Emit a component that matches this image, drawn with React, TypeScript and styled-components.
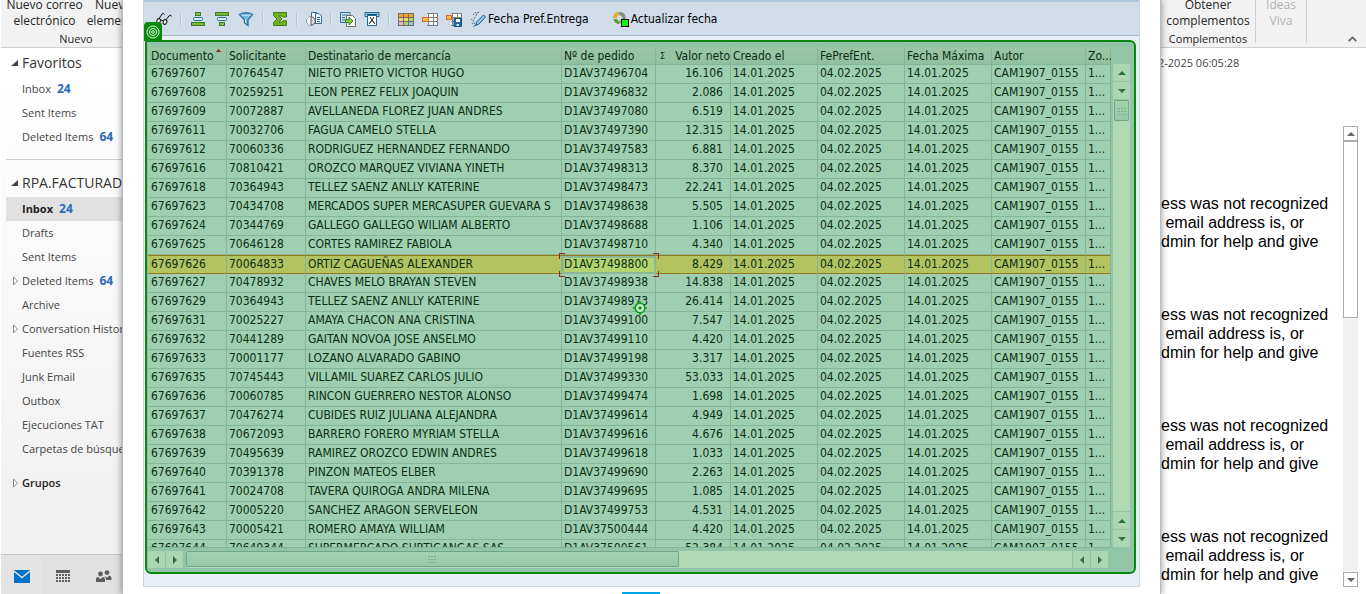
import React from "react";
import styled, { createGlobalStyle, css } from "styled-components";

const GlobalStyle = createGlobalStyle`
  * { box-sizing: border-box; }
  body { margin: 0; background: #fff; overflow: hidden; }
  button { font: inherit; color: inherit; border: 0; padding: 0; margin: 0; background: none; cursor: pointer; }
  a { color: inherit; text-decoration: none; }
  ul { list-style: none; margin: 0; padding: 0; }
`;

const uiFont = `"Open Sans", "Noto Sans", sans-serif`;
const gridFont = `"DejaVu Sans Condensed", "Noto Sans", sans-serif`;

const Desktop = styled.div`
  display: grid;
  grid-template-columns: 122px minmax(0, 1fr) 205px;
  height: 100vh;
  overflow: hidden;
  font: 12px/16px ${uiFont};
  color: #262626;
`;

/* ---------- Mail: folder pane ---------- */

const FolderPane = styled.aside`
  display: flex;
  flex-direction: column;
  min-height: 0;
  overflow: hidden;
  border-left: 1px solid #fff;
  background: linear-gradient(#fff 80px, #f1f1f1 520px);
`;

const Ribbon = styled.div`
  display: flex;
  flex: none;
  height: 48px;
  background: #f2f2f2;
  border-bottom: 1px solid #cfcfcf;
  white-space: nowrap;
`;

const RibbonGroup = styled.section<{ $width: number; $line?: boolean }>`
  display: flex;
  flex-direction: column;
  flex: none;
  width: ${(p) => p.$width}px;
  height: ${(p) => (p.$line ? "43px" : "47px")};
  border-right: ${(p) => (p.$line ? "1px solid #d0d0d0" : "0")};
`;

const RibbonButtons = styled.div`
  display: flex;
  justify-content: center;
  height: 29px;
  align-items: flex-end;
`;

const RibbonButton = styled.button<{ $dim?: boolean }>`
  flex: none;
  padding: 0 2px;
  line-height: 16px;
  font-size: 12px;
  text-align: center;
  color: ${(p) => (p.$dim ? "#b3b3b3" : "#262626")};
`;

const RibbonLabel = styled.div`
  margin-top: 2px;
  text-align: center;
  font-size: 11px;
`;

const FolderNav = styled.nav`
  flex: 1;
  min-height: 0;
  white-space: nowrap;
  padding: 1px 0 0 5px;
`;

const FolderHeading = styled.h2`
  display: flex;
  align-items: center;
  gap: 4px;
  height: 28px;
  margin: 0;
  padding-left: 5px;
  font-size: 14px;
  font-weight: 400;
  color: #333;
`;

const FolderRow = styled.li<{ $active?: boolean }>`
  display: flex;
  align-items: center;
  gap: 4px;
  height: 24px;
  padding-left: 5px;
  font-size: 11px;
  font-weight: ${(p) => (p.$active ? 700 : 400)};
  color: ${(p) => (p.$active ? "#222" : "#444")};
  background: ${(p) => (p.$active ? "#e1e1e1" : "transparent")};
`;

const FolderMark = styled.svg`
  flex: none;
  width: 7px;
  height: 10px;
`;

const Unread = styled.span`
  margin-left: 2px;
  color: #2a6ab8;
  font-size: 12px;
  font-weight: 700;
`;

const Divider = styled.hr`
  margin: 10px 0 9px;
  border: 0;
  border-top: 1px solid #d0d0d0;
`;

const GroupsRow = styled.div`
  display: flex;
  align-items: center;
  gap: 4px;
  height: 24px;
  margin-top: 10px;
  padding-left: 5px;
  font-size: 11px;
  font-weight: 600;
  color: #222;
`;

const ModuleBar = styled.div`
  display: flex;
  flex: none;
  height: 40px;
  border-top: 1px solid #c8c8c8;
  background: #e1e1e1;
`;

const ModuleButton = styled.button<{ $active?: boolean }>`
  display: flex;
  align-items: center;
  justify-content: center;
  width: 41px;
  flex: none;
  padding-top: 3px;
  background: ${(p) => (p.$active ? "#e4e4e4" : "none")};
`;

/* ---------- Order window ---------- */

const Window = styled.main`
  position: relative;
  z-index: 1;
  display: flex;
  flex-direction: column;
  min-height: 0;
  padding: 0 20px;
  background: #fff;
  border: solid #b4bec8;
  border-width: 0 1px;
  box-shadow: 0 0 7px rgba(0, 0, 0, 0.45);
`;

const Panel = styled.div`
  display: flex;
  flex-direction: column;
  flex: 1;
  min-height: 0;
  background: #e8eff7;
  border: solid #cbd6e2;
  border-width: 0 1px 1px;
`;

const Toolbar = styled.div`
  display: flex;
  align-items: center;
  gap: 8px;
  flex: none;
  height: 36px;
  padding-left: 12px;
  border-top: 2px solid #b0c6dd;
  border-bottom: 1px solid #a9bacb;
  background: #d0dde9;
  font: 12px/16px ${gridFont};
  color: #000;
`;

const ToolButton = styled.button<{ $gap?: boolean }>`
  display: flex;
  align-items: center;
  gap: 2px;
  white-space: nowrap;
  margin-left: ${(p) => (p.$gap ? "16px" : "0")};
`;

const ToolSeparator = styled.span`
  width: 2px;
  height: 14px;
  background: #b4c6d8;
  border-right: 1px solid #dde7f0;
`;

const Frame = styled.section`
  position: relative;
  display: flex;
  flex-direction: column;
  flex: 1;
  min-height: 0;
  margin: 4px 3px 12px 1px;
  padding: 5px 2px 4px 1px;
  border: 2px solid #078a0c;
  border-radius: 0 6px 6px 6px;
  background: #92c4a7;
`;

const TargetBadge = styled.span`
  position: absolute;
  left: -3px;
  top: -20px;
  display: flex;
  align-items: center;
  justify-content: center;
  width: 18px;
  height: 19px;
  border-radius: 4px 4px 0 0;
  background: #078a0c;
`;

const GridArea = styled.div`
  display: grid;
  grid-template-columns: minmax(0, 1fr) 20px;
  column-gap: 1px;
  flex: 1;
  min-height: 0;
`;

const TableClip = styled.div`
  min-height: 0;
  overflow: hidden;
  background: #9fcfb0;
  border-bottom: 1px solid #85b598;
`;

const OrderTable = styled.table`
  width: 100%;
  table-layout: fixed;
  border-collapse: separate;
  border-spacing: 0;
  font: 12px/16px ${gridFont};
  color: #0c2e14;
`;

const Col = styled.col<{ $width?: number }>`
  width: ${(p) => (p.$width ? p.$width + "px" : "auto")};
`;

const cell = css`
  position: relative;
  height: 19px;
  padding: 0 0 0 2px;
  line-height: 16px;
  text-align: left;
  vertical-align: top;
  white-space: nowrap;
  border-right: 1px solid #85b598;

  &:first-child {
    padding-left: 3px;
  }
`;

const HeadCell = styled.th<{ $right?: boolean }>`
  ${cell}
  height: 18px;
  padding-top: 1px;
  font-weight: 400;
  text-align: ${(p) => (p.$right ? "right" : "left")};
  background: linear-gradient(#9cc7a3, #92c09f);
  border-bottom: 1px solid #85b598;
`;

const SumMark = styled.span`
  position: absolute;
  left: 4px;
  font-size: 9px;
`;

const SortMark = styled.svg`
  position: absolute;
  right: 5px;
  top: 2px;
`;

const Cell = styled.td<{ $right?: boolean }>`
  ${cell}
  padding-right: ${(p) => (p.$right ? "7px" : "0")};
  text-align: ${(p) => (p.$right ? "right" : "left")};
  border-bottom: 1px solid #85b598;
`;

const Row = styled.tr<{ $selected?: boolean }>`
  ${(p) =>
    p.$selected &&
    css`
      background: #b2c35f;
      ${Cell} {
        border-top: 1px solid #93791c;
        border-bottom-color: #93791c;
      }
    `}
`;

const Focus = styled.span`
  position: absolute;
  z-index: 1;
  inset: -3px -4px -4px -3px;
  pointer-events: none;

  &::before {
    content: "";
    position: absolute;
    inset: 3px;
    border: 2px solid #8cb896;
  }
`;

const FocusText = styled.span`
  display: block;
  height: 17px;
  margin-left: -2px;
  padding-left: 2px;
  background: #b2d570;
  position: relative;
`;

const FocusCorner = styled.i<{ $x: "left" | "right"; $y: "top" | "bottom" }>`
  position: absolute;
  ${(p) => p.$x}: 0;
  ${(p) => p.$y}: 0;
  width: 6px;
  height: 6px;
  border: 0 solid #8c2f10;
  border-${(p) => p.$x}-width: 1px;
  border-${(p) => p.$y}-width: 1px;
`;

const ClickMark = styled.svg`
  position: absolute;
  z-index: 1;
  right: 8px;
  top: 8px;
`;

const ScrollColumn = styled.div`
  display: flex;
  flex-direction: column;
  gap: 1px;
  padding: 17px 0 1px 1px;
`;

const ScrollRow = styled.div`
  display: flex;
  gap: 1px;
  flex: none;
  height: 17px;
  margin: 3px 24px 0 0;
`;

const GridArrow = styled.button`
  display: flex;
  align-items: center;
  justify-content: center;
  flex: none;
  width: 17px;
  height: 17px;
  background: #abd6b1;
`;

const GridTrack = styled.div<{ $vertical?: boolean }>`
  flex: ${(p) => (p.$vertical ? "1 1 0" : "1 1 0")};
  min-width: 0;
  min-height: 0;
  width: ${(p) => (p.$vertical ? "17px" : "auto")};
  background: #b0d9b4;
  margin-left: ${(p) => (p.$vertical ? "0" : "2px")};
`;

const GridThumb = styled.div<{ $vertical?: boolean }>`
  display: flex;
  align-items: center;
  justify-content: center;
  width: ${(p) => (p.$vertical ? "15px" : "55.6%")};
  height: ${(p) => (p.$vertical ? "21px" : "16px")};
  margin-left: ${(p) => (p.$vertical ? "1px" : "0")};
  border: 1px solid #74a686;
  border-radius: 1px;
  background: linear-gradient(#a4d1b0, #98c8a8);
`;

const TaskMark = styled.div`
  align-self: center;
  flex: none;
  width: 38px;
  height: 2px;
  margin: 5px 1px 0 0;
  background: #00a8e8;
`;

/* ---------- Mail: reading pane ---------- */

const ReadingPane = styled.aside`
  display: flex;
  flex-direction: column;
  min-height: 0;
  overflow: hidden;
  background: #fff;
`;

const Collapse = styled.button`
  display: flex;
  align-self: flex-end;
  margin: 0 9px 5px auto;
`;

const Stamp = styled.time`
  display: block;
  flex: none;
  height: 78px;
  padding-top: 7px;
  font-size: 11px;
  line-height: 16px;
  text-indent: -3px;
  color: #444;
  white-space: nowrap;
`;

const Reader = styled.div`
  display: flex;
  flex: 1;
  min-height: 0;
  padding: 0 8px 7px 0;
`;

const MessageList = styled.div`
  flex: 1;
  min-width: 0;
  padding-top: 68px;
  overflow: hidden;
`;

const Message = styled.p`
  margin: 0 0 54px;
  font: 16px/19px "Liberation Sans", Arial, sans-serif;
  color: #000;
  white-space: pre;
`;

const MailScroll = styled.div`
  display: flex;
  flex-direction: column;
  flex: none;
  width: 15px;
  background: #f1f1f1;
`;

const MailArrow = styled.button`
  display: flex;
  align-items: center;
  justify-content: center;
  height: 15px;
  flex: none;
  border: 1px solid #ababab;
  background: #fff;
`;

const MailTrack = styled.div`
  flex: 1;
`;

const MailThumb = styled.div`
  height: 41%;
  border: 1px solid #ababab;
  background: #fff;
`;

/* ---------- Data ---------- */

const orders: [string, string, string, string, string][] = [
  ["67697607", "70764547", "NIETO PRIETO VICTOR HUGO", "D1AV37496704", "16.106"],
  ["67697608", "70259251", "LEON PEREZ FELIX JOAQUIN", "D1AV37496832", "2.086"],
  ["67697609", "70072887", "AVELLANEDA FLOREZ JUAN ANDRES", "D1AV37497080", "6.519"],
  ["67697611", "70032706", "FAGUA CAMELO STELLA", "D1AV37497390", "12.315"],
  ["67697612", "70060336", "RODRIGUEZ HERNANDEZ FERNANDO", "D1AV37497583", "6.881"],
  ["67697616", "70810421", "OROZCO MARQUEZ VIVIANA YINETH", "D1AV37498313", "8.370"],
  ["67697618", "70364943", "TELLEZ SAENZ ANLLY KATERINE", "D1AV37498473", "22.241"],
  ["67697623", "70434708", "MERCADOS SUPER MERCASUPER GUEVARA S", "D1AV37498638", "5.505"],
  ["67697624", "70344769", "GALLEGO GALLEGO WILIAM ALBERTO", "D1AV37498688", "1.106"],
  ["67697625", "70646128", "CORTES RAMIREZ FABIOLA", "D1AV37498710", "4.340"],
  ["67697626", "70064833", "ORTIZ CAGUEÑAS ALEXANDER", "D1AV37498800", "8.429"],
  ["67697627", "70478932", "CHAVES MELO BRAYAN STEVEN", "D1AV37498938", "14.838"],
  ["67697629", "70364943", "TELLEZ SAENZ ANLLY KATERINE", "D1AV37498973", "26.414"],
  ["67697631", "70025227", "AMAYA CHACON ANA CRISTINA", "D1AV37499100", "7.547"],
  ["67697632", "70441289", "GAITAN NOVOA JOSE ANSELMO", "D1AV37499110", "4.420"],
  ["67697633", "70001177", "LOZANO ALVARADO GABINO", "D1AV37499198", "3.317"],
  ["67697635", "70745443", "VILLAMIL SUAREZ CARLOS JULIO", "D1AV37499330", "53.033"],
  ["67697636", "70060785", "RINCON GUERRERO NESTOR ALONSO", "D1AV37499474", "1.698"],
  ["67697637", "70476274", "CUBIDES RUIZ JULIANA ALEJANDRA", "D1AV37499614", "4.949"],
  ["67697638", "70672093", "BARRERO FORERO MYRIAM STELLA", "D1AV37499616", "4.676"],
  ["67697639", "70495639", "RAMIREZ OROZCO EDWIN ANDRES", "D1AV37499618", "1.033"],
  ["67697640", "70391378", "PINZON MATEOS ELBER", "D1AV37499690", "2.263"],
  ["67697641", "70024708", "TAVERA QUIROGA ANDRA MILENA", "D1AV37499695", "1.085"],
  ["67697642", "70005220", "SANCHEZ ARAGON SERVELEON", "D1AV37499753", "4.531"],
  ["67697643", "70005421", "ROMERO AMAYA WILLIAM", "D1AV37500444", "4.420"],
  ["67697644", "70649344", "SUPERMERCADO SURTIGANGAS SAS", "D1AV37500561", "52.384"],
];

const selectedOrder = "67697626";
const clickedOrder = "67697629";

type Folder = { name: string; unread?: number; active?: boolean; branch?: boolean };

const favorites: Folder[] = [
  { name: "Inbox", unread: 24 },
  { name: "Sent Items" },
  { name: "Deleted Items", unread: 64 },
];

const folders: Folder[] = [
  { name: "Inbox", unread: 24, active: true },
  { name: "Drafts" },
  { name: "Sent Items" },
  { name: "Deleted Items", unread: 64, branch: true },
  { name: "Archive" },
  { name: "Conversation History", branch: true },
  { name: "Fuentes RSS" },
  { name: "Junk Email" },
  { name: "Outbox" },
  { name: "Ejecuciones TAT" },
  { name: "Carpetas de búsqueda" },
];

/* ---------- Icons ---------- */

const Icon = ({ children }: { children: React.ReactNode }) => (
  <svg width="16" height="16" viewBox="0 0 16 16" fill="none" aria-hidden="true">
    {children}
  </svg>
);

const GlassesIcon = () => (
  <Icon>
    <g stroke="#111" strokeWidth="1">
      <ellipse cx="2.6" cy="10" rx="1.7" ry="2.4" transform="rotate(20 2.6 10)" fill="#eef4f9" />
      <ellipse cx="9" cy="11" rx="1.8" ry="2.4" transform="rotate(20 9 11)" fill="#eef4f9" />
      <path d="M4.5 9.5Q6 8.5 7.2 10M3.2 7.4L6 3Q7.5 1.5 8.5 3.5M10.2 8.6L13 4.8Q15 3 15.4 5.5" />
    </g>
  </Icon>
);

const SortAscIcon = () => (
  <Icon>
    <rect x="5.5" y="1.5" width="5" height="3" fill="#8cc03c" stroke="#3f7d2e" />
    <rect x="3.5" y="6.5" width="9" height="3" rx="1" fill="#dceaf4" stroke="#1e6f9e" />
    <rect x="1.5" y="11.5" width="13" height="3" fill="#7ab82e" stroke="#3f7d2e" />
  </Icon>
);

const SortDescIcon = () => (
  <Icon>
    <rect x="1.5" y="1.5" width="13" height="3" fill="#7ab82e" stroke="#3f7d2e" />
    <rect x="3.5" y="6.5" width="9" height="3" rx="1" fill="#dceaf4" stroke="#1e6f9e" />
    <rect x="5.5" y="11.5" width="5" height="3" fill="#8cc03c" stroke="#3f7d2e" />
  </Icon>
);

const FilterIcon = () => (
  <Icon>
    <path d="M1.5 3.5Q8 0 14.5 3.5L10 9V14.5L6.5 12V9Z" fill="#7fb0d4" stroke="#2e78ab" strokeWidth="1.4" />
    <path d="M3 3.8Q8 5.5 13 3.8M7.5 8V12" stroke="#c8dff0" />
  </Icon>
);

const SumIcon = () => (
  <Icon>
    <path d="M1.5 1.5H14.5V6H10.5L9.5 5H7L10 8L7 11H10L11 9.8H14.5V14.5H1.5V11.5L5 8L1.5 4.5Z" fill="#72b01c" stroke="#3f7d1e" />
  </Icon>
);

const PreviewIcon = () => (
  <Icon>
    <path d="M5.5 1.5H10.5V12.5H5.5Z" fill="#fff" stroke="#336f99" />
    <path d="M9.5 2.5H13L15.5 5V12.5H9.5Z" fill="#e8f3fb" stroke="#336f99" />
    <path d="M11 6.5H14M11 8.5H14M11 10.5H14" stroke="#336f99" />
    <circle cx="5" cy="10" r="4.2" fill="#ddd" stroke="#555" />
    <path d="M5 5.8V14.2A4.2 4.2 0 0 1 5 5.8" fill="#fff" />
    <path d="M5 6V14" stroke="#555" />
  </Icon>
);

const ExportIcon = () => (
  <Icon>
    <path d="M.5 1.5H10V11.5H.5Z" fill="#cfe1ef" stroke="#2e6d99" />
    <path d="M2 4H8M2 6.5H5M2 9H5" stroke="#2e6d99" />
    <path d="M6.5 4.5H12.5L15.5 7.5V15.5H6.5Z" fill="#fff" stroke="#6b6b6b" />
    <path d="M5.5 8.5H9V6L13 10L9 14V11.5H5.5Z" fill="#8ac63c" stroke="#3f7d2e" />
  </Icon>
);

const SendIcon = () => (
  <Icon>
    <path d="M1 1.5H15V5.5H1Z" fill="#9ec3de" stroke="#1e6a99" />
    <path d="M3 3.5H13" stroke="#1e4a69" />
    <path d="M3.5 4.5H12.5V14.5H3.5Z" fill="#fff" stroke="#1e6a99" />
    <path d="M6 6L10 12M10 6L6 12M5 13L8 9L11 13" stroke="#333" />
  </Icon>
);

const LayoutIcon = () => (
  <Icon>
    <path d="M0 2H16V15H0Z" fill="#6d6d6d" />
    <path d="M1 3H5V6H1ZM6 3H10V6H6ZM11 3H15V6H11Z" fill="#f5a623" />
    <path d="M1 7H5V10H1ZM6 7H10V10H6Z" fill="#f7d774" />
    <path d="M11 7H15V10H11ZM6 11H10V14H6Z" fill="#a9d36c" />
    <path d="M1 11H5V14H1Z" fill="#f3b7c6" />
    <path d="M11 11H15V14H11Z" fill="#8fc4ea" />
  </Icon>
);

const GridLines = () => (
  <>
    <path d="M5 2.5H15.5V13.5H5Z" fill="#fff" />
    <path d="M5 2.5H15.5M5 6.5H15.5M5 10.5H15.5M5 14.5H15.5M6.5 2V15M11.5 2V15M15.5 2V15" stroke="#808080" />
  </>
);

const ChooseLayoutIcon = () => (
  <Icon>
    <GridLines />
    <rect x=".5" y="6.5" width="6" height="4" fill="#ffc34d" stroke="#e2622a" />
  </Icon>
);

const SaveLayoutIcon = () => (
  <Icon>
    <GridLines />
    <rect x=".5" y="4.5" width="5" height="4" fill="#ffc34d" stroke="#e2622a" />
    <path d="M8 7.5H15.5V15.5H8Z" fill="#1e6a99" stroke="#14507a" />
    <path d="M10 8H14V11H10Z" fill="#fff" />
    <path d="M10.5 13H13V15H10.5Z" fill="#cfe1ef" />
  </Icon>
);

const EditDateIcon = () => (
  <Icon>
    <path d="M3 4L5 1.5L7 3L3.5 9M1 8L4 10L2 13L5 12M7 1.5H9" stroke="#4b6f90" strokeDasharray="2 1" />
    <path d="M5.5 14.5L6.5 11L13.5 4L15.5 6L9 13Z" fill="#9cc7e4" stroke="#1f5f8f" />
    <path d="M3.5 15.5L6.5 13.5" stroke="#1f5f8f" />
  </Icon>
);

const RefreshDateIcon = () => (
  <Icon>
    <circle cx="6.5" cy="7" r="4.6" stroke="#5a9c34" strokeWidth="3" strokeDasharray="6 1" />
    <path d="M6.5 2.4A4.6 4.6 0 0 1 11.1 7" stroke="#8a8a8a" strokeWidth="3" />
    <path d="M1.9 7A4.6 4.6 0 0 1 5.5 2.5" stroke="#f0ab2c" strokeWidth="3" />
    <rect x="8.5" y="8.5" width="7" height="7" fill="#12f212" stroke="#000" />
  </Icon>
);

type Direction = "up" | "down" | "left" | "right";

const Arrow = ({ to, color }: { to: Direction; color: string }) => {
  const shapes: Record<Direction, string> = {
    up: "M0 6L4 2L8 6Z",
    down: "M0 2L4 6L8 2Z",
    left: "M6 0L2 4L6 8Z",
    right: "M2 0L6 4L2 8Z",
  };
  return (
    <svg width="8" height="8" viewBox="0 0 8 8" aria-hidden="true">
      <path d={shapes[to]} fill={color} />
    </svg>
  );
};

const Grip = () => (
  <svg width="8" height="8" viewBox="0 0 8 8" aria-hidden="true">
    <path d="M0 1.5H2M3 1.5H5M6 1.5H8M0 4.5H2M3 4.5H5M6 4.5H8M0 7.5H2M3 7.5H5M6 7.5H8" stroke="#7cae8e" />
  </svg>
);

const Expanded = () => (
  <FolderMark viewBox="0 0 7 10" aria-hidden="true">
    <path d="M7 2V8H0Z" fill="#444" />
  </FolderMark>
);

const Branch = ({ shown }: { shown?: boolean }) => (
  <FolderMark viewBox="0 0 7 10" aria-hidden="true">
    {shown && <path d="M2.5 1L6.5 5L2.5 9Z" fill="#fff" stroke="#888" />}
  </FolderMark>
);

/* ---------- Sections ---------- */

const FolderList = ({ items }: { items: Folder[] }) => (
  <ul>
    {items.map((f) => (
      <FolderRow key={f.name} $active={f.active}>
        <Branch shown={f.branch} />
        <a href="#folder">{f.name}</a>
        {f.unread && <Unread>{f.unread}</Unread>}
      </FolderRow>
    ))}
  </ul>
);

const MailFolders = () => (
  <FolderPane>
    <Ribbon>
      <RibbonGroup $width={150}>
        <RibbonButtons>
          <RibbonButton>Nuevo correo<br />electrónico</RibbonButton>
          <RibbonButton>Nuevos<br />elementos</RibbonButton>
        </RibbonButtons>
        <RibbonLabel>Nuevo</RibbonLabel>
      </RibbonGroup>
    </Ribbon>
    <FolderNav>
      <FolderHeading><Expanded />Favoritos</FolderHeading>
      <FolderList items={favorites} />
      <Divider />
      <FolderHeading><Expanded />RPA.FACTURAD</FolderHeading>
      <FolderList items={folders} />
      <GroupsRow><Branch shown /><a href="#groups">Grupos</a></GroupsRow>
    </FolderNav>
    <ModuleBar>
      <ModuleButton $active aria-label="Correo">
        <svg width="16" height="13" viewBox="0 0 16 13">
          <path d="M0 0H16V13H0Z" fill="#0072c6" />
          <path d="M0 1L8 7.5L16 1" fill="none" stroke="#e4e4e4" strokeWidth="1.4" />
        </svg>
      </ModuleButton>
      <ModuleButton aria-label="Calendario">
        <svg width="14" height="12" viewBox="0 0 14 12">
          <path d="M0 0H14V3H0Z" fill="#5f5f5f" />
          <path d="M0 5H14M0 8H14M0 11H14" stroke="#5f5f5f" strokeWidth="2" strokeDasharray="2 1" />
        </svg>
      </ModuleButton>
      <ModuleButton aria-label="Personas">
        <svg width="16" height="12" viewBox="0 0 16 12" fill="#5f5f5f">
          <circle cx="4.5" cy="4" r="2.4" />
          <path d="M0 12V9Q0 7 2 7L4.5 9L7 7Q9 7 9 9V12Z" />
          <circle cx="11" cy="2.6" r="2.4" />
          <path d="M8.5 6L11 7.5L13.5 5.5Q15.5 6 15.5 8V10H10V8.5Z" />
        </svg>
      </ModuleButton>
    </ModuleBar>
  </FolderPane>
);

const OrderToolbar = () => (
  <Toolbar role="toolbar">
    <ToolButton aria-label="Visualizar"><GlassesIcon /></ToolButton>
    <ToolSeparator />
    <ToolButton aria-label="Orden ascendente"><SortAscIcon /></ToolButton>
    <ToolButton aria-label="Orden descendente"><SortDescIcon /></ToolButton>
    <ToolButton aria-label="Filtro"><FilterIcon /></ToolButton>
    <ToolSeparator />
    <ToolButton aria-label="Suma"><SumIcon /></ToolButton>
    <ToolSeparator />
    <ToolButton aria-label="Vista previa"><PreviewIcon /></ToolButton>
    <ToolSeparator />
    <ToolButton aria-label="Exportar"><ExportIcon /></ToolButton>
    <ToolButton aria-label="Enviar"><SendIcon /></ToolButton>
    <ToolSeparator />
    <ToolButton aria-label="Modificar layout"><LayoutIcon /></ToolButton>
    <ToolButton aria-label="Seleccionar layout"><ChooseLayoutIcon /></ToolButton>
    <ToolButton aria-label="Grabar layout"><SaveLayoutIcon /></ToolButton>
    <ToolButton><EditDateIcon />Fecha Pref.Entrega</ToolButton>
    <ToolButton $gap><RefreshDateIcon />Actualizar fecha</ToolButton>
  </Toolbar>
);

const OrderGrid = () => (
  <OrderTable>
    <colgroup>
      <Col $width={79} />
      <Col $width={79} />
      <Col />
      <Col $width={94} />
      <Col $width={75} />
      <Col $width={87} />
      <Col $width={87} />
      <Col $width={87} />
      <Col $width={94} />
      <Col $width={25} />
    </colgroup>
    <thead>
      <tr>
        <HeadCell>
          Documento
          <SortMark width="5" height="3" viewBox="0 0 5 3"><path d="M0 3L2.5 0L5 3Z" fill="#a01c1c" /></SortMark>
        </HeadCell>
        <HeadCell>Solicitante</HeadCell>
        <HeadCell>Destinatario de mercancía</HeadCell>
        <HeadCell>Nº de pedido</HeadCell>
        <HeadCell $right><SumMark>Σ</SumMark>Valor neto</HeadCell>
        <HeadCell>Creado el</HeadCell>
        <HeadCell>FePrefEnt.</HeadCell>
        <HeadCell>Fecha Máxima</HeadCell>
        <HeadCell>Autor</HeadCell>
        <HeadCell>Zo...</HeadCell>
      </tr>
    </thead>
    <tbody>
      {orders.map(([doc, client, name, order, value]) => (
        <Row key={doc} $selected={doc === selectedOrder}>
          <Cell>{doc}</Cell>
          <Cell>{client}</Cell>
          <Cell>{name}</Cell>
          <Cell>
            {doc === selectedOrder ? (
              <>
                <Focus>
                  <FocusCorner $x="left" $y="top" />
                  <FocusCorner $x="right" $y="top" />
                  <FocusCorner $x="left" $y="bottom" />
                  <FocusCorner $x="right" $y="bottom" />
                </Focus>
                <FocusText>{order}</FocusText>
              </>
            ) : (
              order
            )}
            {doc === clickedOrder && (
              <ClickMark width="14" height="14" viewBox="0 0 14 14" fill="none" stroke="#0f9a1c">
                <circle cx="7" cy="7" r="4.8" fill="#c8e8cc" strokeWidth="1.6" />
                <path d="M7 0V3M7 11V14M0 7H3M11 7H14" strokeWidth="1.6" />
                <circle cx="7" cy="7" r="1.2" fill="#0f7a1c" />
              </ClickMark>
            )}
          </Cell>
          <Cell $right>{value}</Cell>
          <Cell>14.01.2025</Cell>
          <Cell>04.02.2025</Cell>
          <Cell>14.01.2025</Cell>
          <Cell>CAM1907_0155</Cell>
          <Cell>1...</Cell>
        </Row>
      ))}
    </tbody>
  </OrderTable>
);

const gridArrow = "#2f6e4c";

const OrderWindow = () => (
  <Window>
    <Panel>
      <OrderToolbar />
      <Frame>
        <TargetBadge>
          <svg width="14" height="14" viewBox="0 0 14 14" fill="none" stroke="#d9f0da">
            <circle cx="7" cy="7" r="6" />
            <circle cx="7" cy="7" r="3.6" />
            <circle cx="7" cy="7" r="1.4" />
          </svg>
        </TargetBadge>
        <GridArea>
          <TableClip><OrderGrid /></TableClip>
          <ScrollColumn>
            <GridArrow aria-label="Subir"><Arrow to="up" color={gridArrow} /></GridArrow>
            <GridArrow aria-label="Bajar"><Arrow to="down" color={gridArrow} /></GridArrow>
            <GridTrack $vertical><GridThumb $vertical><Grip /></GridThumb></GridTrack>
            <GridArrow aria-label="Página arriba"><Arrow to="up" color={gridArrow} /></GridArrow>
            <GridArrow aria-label="Página abajo"><Arrow to="down" color={gridArrow} /></GridArrow>
          </ScrollColumn>
        </GridArea>
        <ScrollRow>
          <GridArrow aria-label="Izquierda"><Arrow to="left" color={gridArrow} /></GridArrow>
          <GridArrow aria-label="Derecha"><Arrow to="right" color={gridArrow} /></GridArrow>
          <GridTrack><GridThumb><Grip /></GridThumb></GridTrack>
          <GridArrow aria-label="Página izquierda"><Arrow to="left" color={gridArrow} /></GridArrow>
          <GridArrow aria-label="Página derecha"><Arrow to="right" color={gridArrow} /></GridArrow>
        </ScrollRow>
      </Frame>
    </Panel>
    <TaskMark />
  </Window>
);

const MailReader = () => (
  <ReadingPane>
    <Ribbon>
      <RibbonGroup $width={95} $line>
        <RibbonButtons>
          <RibbonButton>Obtener<br />complementos</RibbonButton>
        </RibbonButtons>
        <RibbonLabel>Complementos</RibbonLabel>
      </RibbonGroup>
      <RibbonGroup $width={51} $line>
        <RibbonButtons>
          <RibbonButton $dim>Ideas<br />Viva</RibbonButton>
        </RibbonButtons>
      </RibbonGroup>
      <Collapse aria-label="Contraer la cinta">
        <svg width="9" height="6" viewBox="0 0 9 6" fill="none">
          <path d="M.7 5.2L4.5 1.4L8.3 5.2" stroke="#666" strokeWidth="1.8" />
        </svg>
      </Collapse>
    </Ribbon>
    <Stamp>2-2025 06:05:28</Stamp>
    <Reader>
      <MessageList>
        {[0, 1, 2, 3].map((n) => (
          <Message key={n}>{"ess was not recognized\n email address is, or\ndmin for help and give"}</Message>
        ))}
      </MessageList>
      <MailScroll>
        <MailArrow aria-label="Subir mensaje"><Arrow to="up" color="#666" /></MailArrow>
        <MailTrack><MailThumb /></MailTrack>
        <MailArrow aria-label="Bajar mensaje"><Arrow to="down" color="#666" /></MailArrow>
      </MailScroll>
    </Reader>
  </ReadingPane>
);

export default function App() {
  return (
    <>
      <GlobalStyle />
      <Desktop>
        <MailFolders />
        <OrderWindow />
        <MailReader />
      </Desktop>
    </>
  );
}
